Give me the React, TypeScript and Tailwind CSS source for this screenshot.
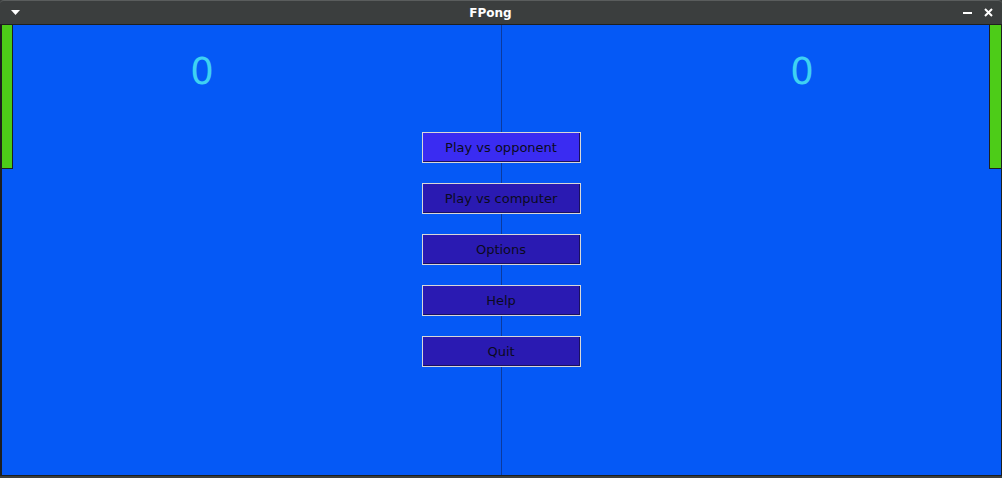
import React from 'react';

const menu = ['Play vs opponent', 'Play vs computer', 'Options', 'Help', 'Quit'];

const App: React.FC = () => {
  return (
    <div className="w-[1002px] h-[478px] flex flex-col bg-[#3b3e3e] overflow-hidden" style={{ fontFamily: '"DejaVu Sans", sans-serif' }}>
      {/* title bar */}
      <div className="h-[24px] flex items-center rounded-t-[4px] border-t border-[#5a5d5d] bg-[#3b3e3e] text-white">
        <div className="w-[30px] flex justify-center pl-[1px]">
          <svg width="9" height="5" viewBox="0 0 9 5">
            <polygon points="0,0 9,0 4.5,5" fill="#ffffff" />
          </svg>
        </div>
        <div className="flex-1 text-center text-[12px] font-bold mr-[12px]">FPong</div>
        <div className="flex items-center gap-[12px] pr-[9px]">
          <svg width="9" height="9" viewBox="0 0 9 9">
            <rect x="0" y="4" width="9" height="2" fill="#ffffff" />
          </svg>
          <svg width="9" height="9" viewBox="0 0 9 9">
            <path d="M1 1 L8 8 M8 1 L1 8" stroke="#ffffff" strokeWidth="2" />
          </svg>
        </div>
      </div>

      {/* game area */}
      <div className="relative h-[452px] border border-t-[#1d1f1f] border-[#1d1f1f] border-l-2 bg-[#0559f6]">
        {/* centre line */}
        <div className="absolute left-[499px] top-0 bottom-0 w-px bg-[#0a3aa0]" />

        {/* paddles */}
        <div className="absolute left-0 top-0 w-[11px] h-[144px] bg-[#4dcc18] border-r border-b border-[#1d1f1f]" />
        <div className="absolute right-0 top-0 w-[12px] h-[144px] bg-[#4dcc18] border-l border-b border-[#1d1f1f]" />

        {/* scores */}
        <div className="absolute left-[180px] top-[24px] w-[40px] text-center text-[37px] leading-[46px] text-[#3fd2f2]">0</div>
        <div className="absolute left-[780px] top-[24px] w-[40px] text-center text-[37px] leading-[46px] text-[#3fd2f2]">0</div>

        {/* menu */}
        <div className="relative flex flex-col items-center gap-[20px] pt-[107px] pr-[1px]">
          {menu.map((label, i) => (
            <button
              key={label}
              className={`w-[159px] h-[31px] border border-[#d8d8d8] text-[13px] text-[#0a0a20] shadow-[inset_-1px_-1px_0_#1a1060] ${
                i === 0 ? 'bg-[#3a2cf2]' : 'bg-[#2a1ab2]'
              }`}
            >
              {label}
            </button>
          ))}
        </div>
      </div>
    </div>
  );
};

export default App;
